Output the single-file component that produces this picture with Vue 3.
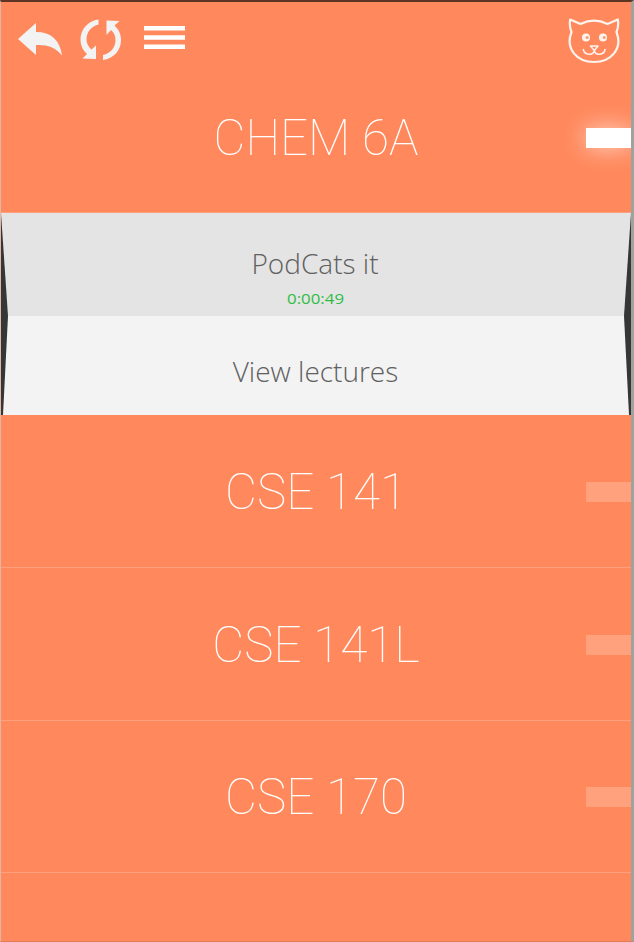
<script setup>
const courses = ['CSE 141', 'CSE 141L', 'CSE 170']
</script>

<template>
  <main class="app">
    <header class="toolbar">
      <svg class="back" viewBox="0 0 44 33" width="44" height="33">
        <path d="M0 16 18 0v9C33 9 42 17 44 32.500C37 24 29 21.500 18 22v10Z" />
      </svg>
      <svg class="sync" viewBox="0 0 42 42" width="42" height="42">
        <path d="M18.500 .5C8 2 .5 10 .5 20.500c0 6 2.500 11 6.500 14.500L2.500 39.500l13.500 .5V26.500l-4.500 4C8.500 28 6.500 24.500 6.500 20.500C6.500 13 11.500 7 18.500 5.500Z" />
        <path d="M23 41c10.500-1.500 18-9.500 18-20 0-6-2.500-11-6.500-14.500L39.500 2 26.500 1.500V16l4.500-5c3 2.500 4.500 6 4.500 10C35.500 28.500 30.500 34.500 23 36Z" />
      </svg>
      <svg class="menu" viewBox="0 0 41 24" width="41" height="24">
        <path d="M0 0h41v4.500H0zM0 9.200h41v4.500H0zM0 18.400h41v4.500H0z" />
      </svg>
      <svg class="cat" viewBox="0 0 52 46" width="52" height="46">
        <path class="line" d="M2.200 1.500 12.500 6C21 1.800 31 1.800 39.500 6L49.800 1.500C50.600 6 50.300 10 48.500 14C55 31 43 44 26 44S-3 31 3.500 14C1.700 10 1.400 6 2.200 1.500Z" />
        <circle class="eye" cx="18" cy="19.500" r="4" />
        <circle class="eye" cx="35" cy="19.500" r="4" />
        <circle class="pupil" cx="19.200" cy="19.500" r="1.500" />
        <circle class="pupil" cx="36.200" cy="19.500" r="1.500" />
        <path class="mouth" d="M22.500 28h7.500l-3.700 4.500ZM26.300 32.500C25 38 16.500 37.500 15.200 31M26.300 32.500C27.500 38 36 37.500 37.200 31" />
      </svg>
    </header>
    <section class="course open">
      <h2>CHEM 6A</h2>
      <span class="tab active"></span>
    </section>
    <section class="fold">
      <div class="panel upper">
        <span class="action">PodCats it</span>
        <span class="time">0:00:49</span>
      </div>
      <div class="panel lower"><span class="action">View lectures</span></div>
    </section>
    <section v-for="c in courses" :key="c" class="course">
      <h2>{{ c }}</h2>
      <span class="tab"></span>
    </section>
  </main>
</template>

<style>
body { margin: 0; background: #ff895d; }
</style>

<style scoped>
.app {
  box-sizing: border-box;
  width: 634px;
  height: 942px;
  overflow: hidden;
  display: flex;
  flex-direction: column;
  background: #ff895d;
  border-top: 2px solid #5e3524;
  border-left: 1px solid #e0b6a4;
  border-right: 3px solid #a0a29e;
  border-bottom: 1px solid #e47d56;
}
.toolbar {
  flex: none;
  height: 59px;
  display: flex;
  align-items: flex-start;
  fill: #f3f3f3;
}
.back { margin: 21px 0 0 17px; }
.sync { margin: 16.500px 0 0 18px; }
.menu { margin: 24px 0 0 22px; fill: #fff; }
.cat { margin: 15.500px 11px 0 auto; fill: none; stroke: #fff3ee; }
.line { stroke-width: 2.200; stroke-linejoin: round; }
.eye { fill: #fff3ee; stroke: none; }
.pupil { fill: #f59b77; stroke: none; }
.mouth { stroke-width: 1.500; stroke-linejoin: round; }
.course {
  flex: none;
  box-sizing: border-box;
  height: 152.600px;
  padding-top: 2px;
  display: grid;
  grid-template-columns: 45px 1fr 45px;
  align-items: center;
  border-bottom: 1px solid #ff9f7b;
}
.open { height: 152px; padding-top: 3px; }
h2 {
  grid-column: 2;
  margin: 0;
  text-align: center;
  color: #fff;
  font: 100 49.300px/60px Roboto, sans-serif;
}
.tab { height: 20px; background: #ffa17c; }
.active {
  background: #fff;
  box-shadow: 0 0 22px rgba(255, 255, 255, .65);
}
.fold {
  flex: none;
  height: 202px;
  display: flex;
  flex-direction: column;
  background: #343735;
}
.fold + .course { height: 153px; }
.panel {
  box-sizing: border-box;
  display: flex;
  flex-direction: column;
  align-items: center;
  color: #606060;
}
.upper {
  height: 103px;
  padding: 31px 2px 0 0;
  background: #e4e4e4;
  clip-path: polygon(0 0, 100% 0, 623px 100%, 7px 100%);
}
.lower {
  height: 99px;
  padding: 36px 1px 0 0;
  background: #f3f3f3;
  clip-path: polygon(7px 0, 623px 0, 628px 100%, 2px 100%);
}
.action { font: 300 28px/38px "Open Sans", sans-serif; }
.time {
  margin: 7px 0 0 1px;
  font: 500 14.500px/20px "Open Sans", sans-serif;
  color: #2fbd45;
  transform: scaleX(1.160);
}
</style>
